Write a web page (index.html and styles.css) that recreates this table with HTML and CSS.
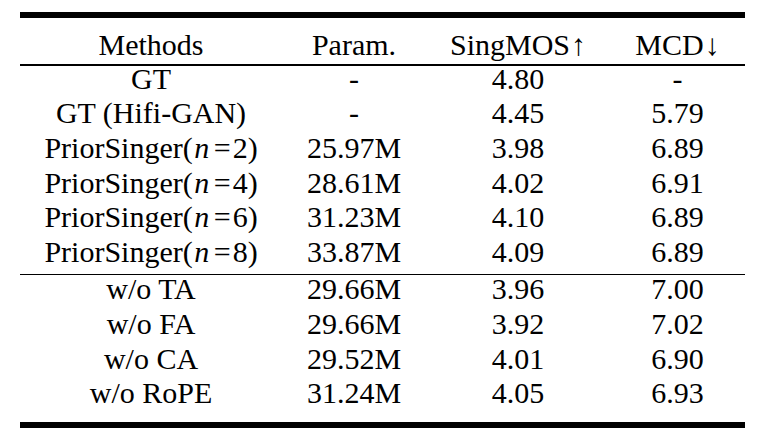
FILE: index.html
```html
<!DOCTYPE html>
<html>
<head>
<meta charset="utf-8">
<link rel="stylesheet" href="styles.css">
</head>
<body>
<div class="table">
  <div class="rule heavy"></div>
  <div class="row head">
    <div>Methods</div><div>Param.</div><div>SingMOS<span class="arr">↑</span></div><div>MCD<span class="arr">↓</span></div>
  </div>
  <div class="rule mid"></div>
  <div class="group">
    <div class="row"><div>GT</div><div>-</div><div>4.80</div><div>-</div></div>
    <div class="row"><div>GT (Hifi-GAN)</div><div>-</div><div>4.45</div><div>5.79</div></div>
    <div class="row"><div>PriorSinger(<i>n</i><span class="eq">=</span>2)</div><div>25.97M</div><div>3.98</div><div>6.89</div></div>
    <div class="row"><div>PriorSinger(<i>n</i><span class="eq">=</span>4)</div><div>28.61M</div><div>4.02</div><div>6.91</div></div>
    <div class="row"><div>PriorSinger(<i>n</i><span class="eq">=</span>6)</div><div>31.23M</div><div>4.10</div><div>6.89</div></div>
    <div class="row"><div>PriorSinger(<i>n</i><span class="eq">=</span>8)</div><div>33.87M</div><div>4.09</div><div>6.89</div></div>
  </div>
  <div class="rule thin"></div>
  <div class="group second">
    <div class="row"><div>w/o TA</div><div>29.66M</div><div>3.96</div><div>7.00</div></div>
    <div class="row"><div>w/o FA</div><div>29.66M</div><div>3.92</div><div>7.02</div></div>
    <div class="row"><div>w/o CA</div><div>29.52M</div><div>4.01</div><div>6.90</div></div>
    <div class="row"><div>w/o RoPE</div><div>31.24M</div><div>4.05</div><div>6.93</div></div>
  </div>
  <div class="rule heavy bottom"></div>
</div>
</body>
</html>
```
FILE: styles.css
```css
html, body {
  margin: 0;
  padding: 0;
  background: #ffffff;
}
body {
  padding: 12px 0 0 20px;
  font-family: "Liberation Serif", "Times New Roman", serif;
  font-size: 30px;
  color: #000000;
}
.table {
  width: 725px;
}
.rule {
  background: #000000;
}
.rule.heavy {
  height: 6px;
}
.rule.mid {
  height: 1.5px;
}
.rule.thin {
  height: 1.3px;
}
.rule.bottom {
  margin-top: 6.7px;
}
.row {
  display: grid;
  grid-template-columns: 262px 144px 184px 135px;
  text-align: center;
  line-height: 25.35px;
  padding-bottom: 9.35px;
  white-space: nowrap;
}
.row.head {
  line-height: 34.7px;
  padding-top: 9.5px;
  padding-bottom: 1.8px;
}
.group.second {
  padding-top: 1.5px;
}
.row i {
  font-style: italic;
  padding: 0 2.5px 0 1.5px;
}
.eq {
  padding: 0 2px;
}
.arr {
  padding-left: 1px;
}
```
